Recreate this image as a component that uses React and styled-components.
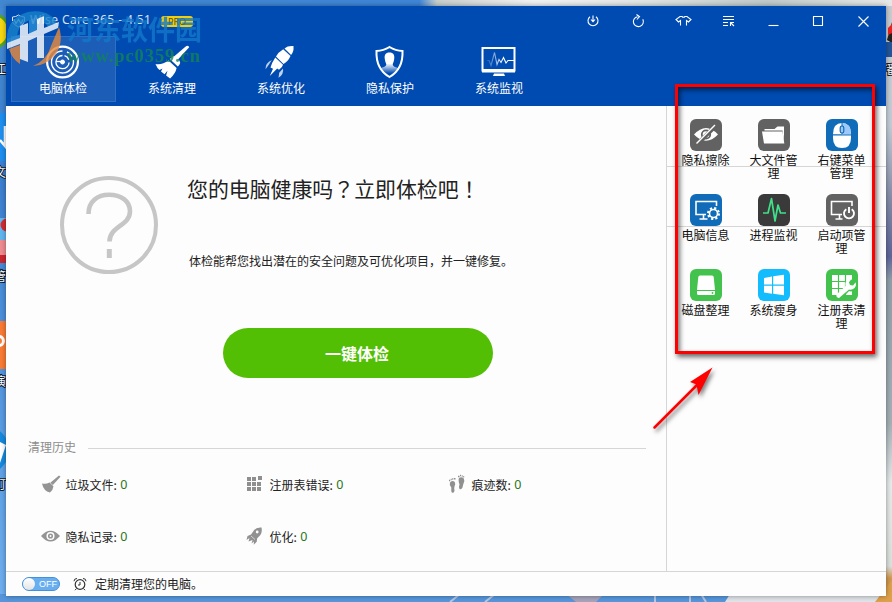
import React, { useState } from "react";
import styled, { createGlobalStyle } from "styled-components";

const GlobalStyle = createGlobalStyle`
  * {
    box-sizing: border-box;
  }

  body {
    margin: 0;
    overflow: hidden;
    font-family: "Noto Sans CJK SC", "Noto Sans", sans-serif;
    font-size: 12px;
    color: #222;
  }
`;

//  Styled components
const Desktop = styled.div`
  position: relative;
  width: 892px;
  height: 602px;
  padding: 6px;
  overflow: hidden;
  background: #4a8fdc;
`;

const Backdrop = styled.svg`
  position: absolute;
  inset: 0;
`;

const AppWindow = styled.div`
  position: relative;
  display: flex;
  flex-direction: column;
  width: 880px;
  height: 590px;
  background: #fdfdfd;
  box-shadow: 0 0 5px rgba(0, 0, 0, 0.4);
`;

const Header = styled.header`
  height: 100px;
  flex: none;
  background: #004bb1;
  color: #fff;
`;

const TitleBar = styled.div`
  display: flex;
  align-items: center;
  height: 30px;
  padding: 0 0 0 5px;
`;

const Title = styled.div`
  margin-left: 4px;
  width: 122px;
  font-family: "Noto Sans", sans-serif;
  font-size: 12px;
  letter-spacing: 0.4px;
  line-height: 16px;
  padding-bottom: 2px;
  white-space: nowrap;
  color: #d5e2f5;
`;

const ProTag = styled.span`
  margin-left: 9px;
  width: 32px;
  height: 11px;
  border-radius: 3px;
  background: #f0cf10;
  color: #5b4c08;
  font-family: "Noto Sans", sans-serif;
  font-size: 9px;
  line-height: 11px;
  text-align: center;
`;

const WindowButtons = styled.div`
  display: flex;
  margin-left: auto;
`;

const WindowButton = styled.button`
  display: flex;
  align-items: center;
  justify-content: center;
  width: 45px;
  height: 30px;
  padding: 0;
  border: 0;
  background: none;
`;

const Nav = styled.nav`
  display: flex;
  gap: 4px;
  padding-left: 5px;
`;

const NavItem = styled.button`
  display: flex;
  flex-direction: column;
  align-items: center;
  width: 105px;
  height: 66px;
  padding: 7px 1px 0 0;
  border: 1px solid ${props => (props.$active ? "#2f6fc4" : "transparent")};
  background: ${props => (props.$active ? "#1c5db8" : "none")};
  color: #fff;
  font-family: inherit;
  font-size: 12px;
  line-height: 16px;
`;

const Body = styled.div`
  display: flex;
  height: 465px;
  flex: none;
`;

const Main = styled.main`
  width: 660px;
  flex: none;
`;

const Hero = styled.section`
  display: flex;
  height: 222px;
  padding: 70px 0 0 54px;
`;

const HeroText = styled.div`
  margin-left: 30px;
`;

const Headline = styled.h1`
  margin: -4px 0 0 -1px;
  font-size: 20.9px;
  font-weight: 400;
  line-height: 32px;
  white-space: nowrap;
`;

// full-width punctuation centred in its cell
const Mark = styled.span`
  font-family: "Noto Sans CJK TC", sans-serif;
`;

const Hint = styled.p`
  margin: 49px 0 0 1px;
  line-height: 16px;
  white-space: nowrap;
`;

const CheckButton = styled.button`
  display: block;
  width: 270px;
  height: 50px;
  margin-left: 217px;
  padding: 0 2px 0 0;
  border: 0;
  border-radius: 25px;
  background: #52bf04;
  color: #fff;
  font-family: inherit;
  font-size: 16px;
  font-weight: 700;
  line-height: 48px;
`;

const HistoryHead = styled.div`
  display: flex;
  align-items: center;
  gap: 12px;
  height: 16px;
  margin: 60px 20px 0 22px;
  color: #8d8d8d;
`;

const Rule = styled.div`
  flex: 1;
  height: 1px;
  margin-top: 5px;
  background: #d6d6d6;
`;

const Stats = styled.div`
  display: grid;
  grid-template-columns: 204px 202px 200px;
  grid-auto-rows: 52px;
  margin: 4px 0 0 35px;
`;

const Stat = styled.div`
  display: flex;
  align-items: center;
  gap: 4.500px;
  white-space: nowrap;

  b {
    margin-left: -1px;
    font-family: "Noto Sans", sans-serif;
    font-size: 12.5px;
    font-weight: 400;
    color: #2c7520;
  }
`;

const Side = styled.aside`
  width: 220px;
  border-left: 1px solid #d6d6d6;
  background: linear-gradient(#d6d6d6, #d6d6d6) 0 60px / 100% 1px no-repeat,
    linear-gradient(#d6d6d6, #d6d6d6) 0 120px / 100% 1px no-repeat;
`;

const Tools = styled.div`
  display: grid;
  grid-template-columns: repeat(3, 68px);
  grid-auto-rows: 75px;
  padding: 13px 0 0 5px;
`;

const Tool = styled.div`
  display: flex;
  flex-direction: column;
  align-items: center;
  gap: 2px;
  color: #111;
  line-height: 13px;
  text-align: center;

  span {
    width: 50px;
    margin-right: 1px;
  }
`;

const Tile = styled.svg`
  display: block;
  width: 32px;
  height: 32px;
  flex: none;
  border-radius: 6px;
  background: ${props => props.$color};
`;

const Footer = styled.footer`
  display: flex;
  align-items: center;
  height: 25px;
  padding-left: 16px;
  border-top: 1px solid #d6d6d6;

  span {
    margin: -2px 0 0 8px;
  }
`;

const Switch = styled.button`
  display: flex;
  flex-direction: ${props => (props.$on ? "row-reverse" : "row")};
  align-items: center;
  width: 38px;
  height: 14px;
  margin-right: 13px;
  padding: 0 4px 0 0;
  border: 1px solid #4390dc;
  border-radius: 7px;
  background: #69aff0;
  color: #fff;
  font-family: "Liberation Sans", sans-serif;
  font-size: 9px;
  line-height: 12px;
`;

const Knob = styled.i`
  width: 12px;
  height: 12px;
  margin-right: 4px;
  flex: none;
  border-radius: 50%;
  background: linear-gradient(#fff, #e4e4e4);
`;

const Watermark = styled.div`
  position: absolute;
  left: 6px;
  top: 8px;
  display: flex;
  opacity: 0.8;
`;

const WatermarkText = styled.div`
  margin-left: 3px;
  padding-top: 3px;
  white-space: nowrap;

  strong {
    display: block;
    font-size: 27px;
    line-height: 36px;
    color: #1279cb;
  }

  em {
    display: block;
    font: 700 18.5px/18px "Liberation Serif", serif;
    letter-spacing: 0.9px;
    color: #128653;
  }
`;

const Marker = styled.div`
  position: absolute;
  left: 675px;
  top: 84px;
  width: 200px;
  height: 270px;
  border: 3px solid #f00;
  box-shadow: 2px 3px 5px rgba(0, 0, 0, 0.6), inset 2px 3px 5px rgba(0, 0, 0, 0.55);
`;

const Arrow = styled.svg`
  position: absolute;
  left: 640px;
  top: 355px;
  filter: drop-shadow(2px 3px 2px rgba(0, 0, 0, 0.5));
`;

//  End Styled components

const navIcons = {
  radar: (
    <g fill="none" stroke="#fff">
      <circle cx="17.5" cy="18" r="15.4" strokeWidth="2.2" />
      <path d="M17.5 7a11 11 0 1 0 10.8 9M22 8a11 11 0 0 1 5 4.5" strokeWidth="1.4" />
      <path d="M17.5 11.500a6.600 6.600 0 1 0 6.600 7M19.500 11.700a6.600 6.600 0 0 1 4.300 4" strokeWidth="1.300" />
      <circle cx="17.5" cy="18" r="2" fill="#fff" />
      <path d="M17 17.500h-6" strokeWidth="1.300" />
    </g>
  ),
  broom: (
    <g fill="#fff">
      <path d="M32 2.200q2.500-1.500 3.200 1l-11.500 12.500-3.700-3.300z" />
      <path d="M17.500 13.500q2-2 4-.5l4 3.800q1.500 2-.3 4.200l-1.400 1.500-8-7.500z" />
      <path d="M14.500 16.500q-6 4.500-13 3.500 1.500 4 4 6l3-1.500-1.500 3 3.500 2.800 3-3.500-1.400 4.800 4 2.900q5.500-5 6.500-10.500z" />
    </g>
  ),
  rocket: (
    <g fill="#fff">
      <path d="M30.500 2q-6-.5-9 2.400l6.600 6.500q2.900-3 2.400-8.900z" />
      <path d="M20.200 5.200q-5 3-7.200 7.300l7.500 7.400q4.500-2.300 7-7.900z" />
      <path d="M12.300 13.600q-3.500 5.200-4.800 10l2.500 1.200-3.200 7.200 7.400-7.600 1.800 1.400q3.500-2.300 4-5z" />
      <path d="M8.800 16q-6.500 3-6.300 9.200l3.300-4.500zM20 24.500q1 6-4.500 9.200l.7-5z" opacity=".75" />
    </g>
  ),
  shield: (
    <g>
      <path
        d="M17.500 3q6 3.800 13 4 .8 18-13 26Q3.700 25 4.500 7q7-.2 13-4z"
        fill="none"
        stroke="#fff"
        strokeWidth="2"
      />
      <path
        d="M17.500 8.500c4 0 5.300 2.500 4.700 6.500-.3 2.500-1.200 4-1.500 5.500.3 2.500 4 2.500 5.300 4q-3.500 4-8.500 6-5-2-8.500-6c1.300-1.500 5-1.500 5.300-4-.3-1.500-1.200-3-1.500-5.500-.6-4 .7-6.500 4.700-6.500z"
        fill="url(#fade)"
      />
      <defs>
        <linearGradient id="fade" x1="0" y1="0" x2="0" y2="1">
          <stop offset=".5" stopColor="#fff" />
          <stop offset=".95" stopColor="#fff" stopOpacity="0" />
        </linearGradient>
      </defs>
    </g>
  ),
  monitor: (
    <g>
      <path d="M1.500 4h32v22.500h-32z" fill="none" stroke="#fff" strokeWidth="2" />
      <path d="M1 25h33v3.500H1zM13 29.500h10l1 2.500H12z" fill="#fff" />
      <path
        d="M6 16.500h2l2 5 3.500-13 2.500 12 2-5 2 3 2.500-5 2.500 5.500 2-2.500h6"
        fill="none"
        stroke="url(#pulse)"
        strokeWidth="1.100"
      />
      <defs>
        <linearGradient id="pulse">
          <stop offset="0" stopColor="#fff" stopOpacity=".1" />
          <stop offset=".6" stopColor="#fff" />
        </linearGradient>
      </defs>
    </g>
  )
};

const navItems = [
  { label: "电脑体检", icon: "radar" },
  { label: "系统清理", icon: "broom" },
  { label: "系统优化", icon: "rocket" },
  { label: "隐私保护", icon: "shield" },
  { label: "系统监视", icon: "monitor" }
];

// all drawn on a 17px grid
const windowIcons = [
  {
    name: "update",
    art: <path d="M5 3.700a5 5 0 1 0 6 0M8 2.500v6M6 6.500l2 2.200 2-2.200" />
  },
  {
    name: "refresh",
    art: <path d="M12.800 6.300a5 5 0 1 1-5.300-2.600M6.500 1.500l3 2.200-2.600 2.800" />
  },
  {
    name: "skin",
    art: <path d="M5.500 12.500V7.500L3.500 9 1 6.500 5 3.500h2q1.500 1.500 3 0h2l4 3L13.500 9l-2-1.500v5" />
  },
  {
    name: "menu",
    art: <path d="M3 3.500h11M3 6.500h11M3 9.500h5M3 12.500h5M10.500 13V9.500H14M10.500 9.500l3.500 3.500" />
  },
  { name: "minimize", art: <path d="M3.500 12.500h10" /> },
  { name: "maximize", art: <path d="M3.500 3.500h9v9h-9z" /> },
  { name: "close", art: <path d="M3.500 3.500l10 10M13.500 3.500l-10 10" /> }
];

const tools = [
  {
    label: "隐私擦除",
    color: "#626262",
    art: (
      <g>
        <path d="M4 15.500q12-13 24 0-12 12.500-24 0z" fill="#fff" />
        <circle cx="16" cy="15.500" r="4.200" fill="none" stroke="#626262" strokeWidth="1.800" />
        <path d="M7.500 25L25.500 7" stroke="#626262" strokeWidth="4" />
        <path d="M6.500 24.500L25 6" stroke="#fff" strokeWidth="1.500" />
      </g>
    )
  },
  {
    label: "大文件管理",
    color: "#626262",
    art: (
      <g fill="#fff">
        <path d="M6.500 11.500V10h10l3-2.500h6.500v16l-1.500-12z" />
        <path d="M4 12.500h20.500l1.800 12H6z" />
      </g>
    )
  },
  {
    label: "右键菜单管理",
    color: "#106cb8",
    art: (
      <g>
        <path d="M7 15.200Q7 4 16 4t9 11.200z" fill="#fff" />
        <path d="M16 4q9 0 9 11.200h-9z" fill="#9cc9fa" />
        <path d="M7 16.500h18V19q0 10-9 10T7 19z" fill="#fff" />
        <path d="M16 4v11" stroke="#106cb8" />
        <rect x="14.200" y="7" width="3.600" height="7" rx="1.800" fill="#9cc9fa" stroke="#106cb8" strokeWidth="1.200" />
      </g>
    )
  },
  {
    label: "电脑信息",
    color: "#106cb8",
    art: (
      <g fill="none" stroke="#fff" strokeWidth="1.600">
        <path d="M16 20.500H6v-13h20.500V12M9.500 25h8M13.500 21v4" />
        <circle cx="23.500" cy="19.500" r="4" />
        <circle cx="23.500" cy="19.500" r="5.500" strokeDasharray="2.200 2.120" strokeWidth="2" />
      </g>
    )
  },
  {
    label: "进程监视",
    color: "#3a3a3a",
    art: (
      <path
        d="M5 19h5l3.500-14.500L17 27l3-16 2.500 8h5.500"
        fill="none"
        stroke="#3fe08a"
        strokeWidth="1.700"
        strokeLinejoin="round"
      />
    )
  },
  {
    label: "启动项管理",
    color: "#626262",
    art: (
      <g fill="none" stroke="#fff" strokeWidth="1.600">
        <path d="M16 20.500H5.500v-13H26V12M9.500 25h7M13.500 21v4" />
        <path d="M20.300 15.200a5 5 0 1 0 5.400 0M23 13v6" strokeWidth="1.900" />
      </g>
    )
  },
  {
    label: "磁盘整理",
    color: "#43c34e",
    art: (
      <g>
        <path d="M10 6.500h12q1.500 0 1.700 1.500L25 21H7L8.300 8q.2-1.500 1.700-1.500z" fill="#fff" />
        <path d="M7 22h18v2.500q0 1.500-1.500 1.500h-15Q7 26 7 24.500z" fill="#fff" />
        <circle cx="22.500" cy="24" r=".9" fill="#43c34e" />
      </g>
    )
  },
  {
    label: "系统瘦身",
    color: "#12bcfd",
    art: (
      <path
        d="M6 9l8-1.500v8H6zM15.200 7.300L26 5.700v9.800H15.200zM6 16.800h8v7.900l-8-1.200zM15.200 16.800H26v9.500l-10.800-1.500z"
        fill="#fff"
      />
    )
  },
  {
    label: "注册表清理",
    color: "#43c34e",
    art: (
      <g>
        <path d="M6 6h20v20H6z" fill="#fff" />
        <path d="M6 12.500h20M6 19.500h20M12.500 6v20M19.500 6v20" stroke="#43c34e" strokeWidth="1.200" />
        <path d="M13 28l8-8" stroke="#43c34e" strokeWidth="6" strokeLinecap="round" />
        <circle cx="25" cy="16.500" r="6" fill="#43c34e" />
        <path
          d="M11.500 28.500Q9.500 27 11 25l8.500-8q-1-5 3.500-6.800 1.500-.5 2.500-.2l-2.500 3.200 1 2.800 3 .5 2.700-3.200q1 5-2.700 6.800-2 1-4 .4L14.200 28q-1.200 1.500-2.700.5z"
          fill="#fff"
        />
      </g>
    )
  }
];

const stats = [
  {
    label: "垃圾文件",
    value: 0,
    art: (
      <g fill="#949494">
        <path d="M18 1.500l1.500 1.200-7.700 8.300-2.500-2.300z" />
        <path d="M8.500 8.500l4 3.700q-.5 4-3.500 6.300Q2.500 17 1 9.500q4 1 7.500-1z" />
      </g>
    )
  },
  {
    label: "注册表错误",
    value: 0,
    art: (
      <path
        d="M2 3h4v4H2zM7 3h4v4H7zM13 2h4v4h-4zM2 8h4v4H2zM7 8h4v4H7zM12 8h4v4h-4zM2 13h4v4H2zM7 13h4v4H7zM12 13h4v4h-4z"
        fill="#8f8f8f"
      />
    )
  },
  {
    label: "痕迹数",
    value: 0,
    art: (
      <g fill="#909090">
        <path d="M3 8.500q2.500-2.500 4.700-.5 1.300 2-.2 4.500-.6 1.500 0 4-.3 3-2.700 2Q4 17 4.300 13.500 2 11 3 8.500zM12 4q2.800-1.500 4.800.5 1.200 2-.3 5-.5 1.500-1 4-1 2.300-3 1.500-1.200-1.500 0-4.500Q11 6 12 4z" />
        <path d="M2 6.500h1.200M3.700 5.500h1M5.200 5h1M6.800 4.700h1.700M11 2.500h1.500M13 1.500h1M14.700 2h1M16.200 2.800h1" stroke="#909090" strokeWidth="1.400" />
      </g>
    )
  },
  {
    label: "隐私记录",
    value: 0,
    art: (
      <g>
        <path d="M0 10q9.500-10.500 19 0-9.500 11-19 0z" fill="#949494" />
        <circle cx="9.500" cy="10" r="3.300" fill="#949494" stroke="#fdfdfd" strokeWidth="1.500" />
        <circle cx="9.500" cy="10" r="1" fill="#fdfdfd" />
      </g>
    )
  },
  {
    label: "优化",
    value: 0,
    art: (
      <g>
        <path d="M16.500 1.500q-5-.5-7.500 2.700L6 8.500 2.500 10l-1 4 3-2-1 3.500 4-1.500-1 3.500 2.500-2-.3 3.300 3-3 .5-3.500 3-3q2.300-2.800 1.300-7.800z" fill="#919191" />
        <circle cx="12.200" cy="6" r="1.400" fill="#fdfdfd" />
        <path d="M6 10l4 3.500" stroke="#fdfdfd" strokeWidth=".6" />
      </g>
    )
  }
];

// icons whose edges stick out from behind the window
const desktopLabels = [
  { text: "江", y: 74 },
  { text: "文", y: 177 },
  { text: "管", y: 281 },
  { text: "演", y: 386 },
  { text: "町", y: 489 }
];

function DesktopArt() {
  return (
    <Backdrop width="892" height="602">
      <defs>
        <linearGradient id="sky" x1="0" y1="0" x2="0" y2="1">
          <stop offset="0" stopColor="#438bd6" />
          <stop offset=".3" stopColor="#3c80cf" />
          <stop offset="1" stopColor="#70b0f0" />
        </linearGradient>
        <linearGradient id="top">
          <stop offset="0" stopColor="#4187d2" />
          <stop offset=".47" stopColor="#3f86d8" />
          <stop offset=".49" stopColor="#c7cfcd" />
          <stop offset=".6" stopColor="#f1f3f3" />
          <stop offset=".72" stopColor="#dfe4e4" />
          <stop offset=".86" stopColor="#bfcaca" />
          <stop offset="1" stopColor="#e6e8e8" />
        </linearGradient>
        <linearGradient id="right" x1="0" y1="0" x2="0" y2="1">
          <stop offset="0" stopColor="#c8cccf" />
          <stop offset=".2" stopColor="#c2ccd6" />
          <stop offset=".33" stopColor="#8189a5" />
          <stop offset=".42" stopColor="#5e6699" />
          <stop offset=".46" stopColor="#8f9fa8" />
          <stop offset=".7" stopColor="#a4b0b6" />
          <stop offset=".8" stopColor="#e6eaea" />
          <stop offset=".94" stopColor="#dce0dc" />
          <stop offset=".96" stopColor="#cf9850" />
        </linearGradient>
      </defs>
      <rect width="20" height="602" fill="url(#sky)" />
      <rect width="892" height="8" fill="url(#top)" />
      <rect x="884" y="6" width="8" height="596" fill="url(#right)" />
      <path d="M0 594h730v8H0z" fill="#5796dc" />
      <path d="M730 594h162v8H725z" fill="#dfe4e8" />
      <path d="M450 602l10-8M485 602l10-8M655 602v-8M690 602v-8M706 602l-5-8" stroke="#b7c9e6" strokeWidth="2" />
      <path d="M566 594h38l-8 8h-20z" fill="#a6a3bb" />
      <path d="M875 602l17-22v22z" fill="#dda04b" />
      <path d="M892 22l-5 18 5 3z" fill="#222" />
      <path d="M888 28l4-4v9l-4 2z" fill="#e22" />
      <path d="M886 42h6v15h-6z" fill="#24569b" />
      <circle cx="-8" cy="31" r="17" fill="#f6d812" stroke="#55a522" strokeWidth="3" />
      <rect x="-40" y="113" width="48" height="48" fill="#1e8ff0" />
      <path d="M0 140l5 6V126" fill="none" stroke="#fff" strokeWidth="2.500" />
      <rect x="-40" y="218" width="48" height="23" fill="#62b6ef" />
      <circle cx="7" cy="225" r="6.500" fill="#d62b31" />
      <rect x="-40" y="240" width="48" height="22" fill="#ef8c92" />
      <rect x="-40" y="255" width="48" height="8" fill="#cb2730" />
      <rect x="-40" y="321" width="48" height="48" fill="#fa7b35" />
      <circle cx="-1" cy="341" r="4.500" fill="none" stroke="#fff" strokeWidth="3" />
      <circle cx="-15" cy="450" r="24" fill="#1689dd" />
      <path d="M0 442l6 3-6 18z" fill="#fff" />
      {desktopLabels.map(label => (
        <text key={label.y} x="-6" y={label.y} fontSize="12" fill="#fff" stroke="#123" strokeWidth="2" paintOrder="stroke">
          {label.text}
        </text>
      ))}
      <text x="886" y="74" fontSize="12" fill="#fff" stroke="#222" strokeWidth="2" paintOrder="stroke">
        番
      </text>
    </Backdrop>
  );
}

function App() {
  const [active, setActive] = useState("电脑体检");
  const [scheduled, setScheduled] = useState(false);

  return (
    <Desktop>
      <GlobalStyle />
      <DesktopArt />

      <AppWindow>
        <Header>
          <TitleBar>
            <svg width="15" height="14" viewBox="0 0 15 14" fill="none" stroke="#d5e2f5">
              <path d="M1.500 7V3Q5 3 7.500 1q2.500 2 6 2v4q-1 4-6 6-4.500-2-6-5" />
              <path d="M3 5.500l2 4 2.500-4 2.500 4 2-4" strokeWidth="1.300" />
            </svg>
            <Title>Wise Care 365 - 4.51</Title>
            <ProTag>PRO</ProTag>
            <WindowButtons>
              {windowIcons.map(icon => (
                <WindowButton key={icon.name} aria-label={icon.name}>
                  <svg width="17" height="17" fill="none" stroke="#fff" strokeWidth="1.100">
                    {icon.art}
                  </svg>
                </WindowButton>
              ))}
            </WindowButtons>
          </TitleBar>
          <Nav>
            {navItems.map(item => (
              <NavItem
                key={item.label}
                $active={item.label === active}
                onClick={() => setActive(item.label)}
              >
                <svg width="36" height="36">
                  {navIcons[item.icon]}
                </svg>
                {item.label}
              </NavItem>
            ))}
          </Nav>
        </Header>

        <Body>
          <Main>
            <Hero>
              <svg width="98" height="98" fill="none" stroke="#c6c6c6" strokeWidth="4">
                <circle cx="49" cy="49" r="47" />
                <path d="M28.500 38C28.500 25 38 18.800 49 18.800c12 0 21 6 21 16.500C70 50 49.500 50 49.500 65.500" strokeWidth="4.600" />
                <path d="M49.300 73v9" strokeWidth="5" />
              </svg>
              <HeroText>
                <Headline>
                  您的电脑健康吗<Mark>？</Mark>立即体检吧<Mark>！</Mark>
                </Headline>
                <Hint>体检能帮您找出潜在的安全问题及可优化项目，并一键修复。</Hint>
              </HeroText>
            </Hero>
            <CheckButton>一键体检</CheckButton>
            <HistoryHead>
              清理历史
              <Rule />
            </HistoryHead>
            <Stats>
              {stats.map(stat => (
                <Stat key={stat.label}>
                  <svg width="20" height="20">
                    {stat.art}
                  </svg>
                  {stat.label}: <b>{stat.value}</b>
                </Stat>
              ))}
            </Stats>
          </Main>
          <Side>
            <Tools>
              {tools.map(tool => (
                <Tool key={tool.label}>
                  <Tile $color={tool.color}>{tool.art}</Tile>
                  <span>{tool.label}</span>
                </Tool>
              ))}
            </Tools>
          </Side>
        </Body>

        <Footer>
          <Switch $on={scheduled} onClick={() => setScheduled(!scheduled)}>
            <Knob />
            {scheduled ? "ON" : "OFF"}
          </Switch>
          <svg width="14" height="14" fill="none" stroke="#333">
            <circle cx="7" cy="7.500" r="4.800" strokeWidth="1.200" />
            <path d="M7 5v3h-2M1 4.200Q1 1.500 4 1.500M13 4.200Q13 1.500 10 1.500M3.500 11.500L2 13.200M10.500 11.500l1.500 1.700" />
          </svg>
          <span>定期清理您的电脑。</span>
        </Footer>
      </AppWindow>

      <Watermark>
        <svg width="58" height="60">
          <path d="M1 33Q0 10 22 4q22-4 31 14l-9 3Q36 9 24 12 11 16 11 31z" fill="#1a83cc" />
          <path d="M1 31l17-6v8l-17 7zM23 12l8-3v17l-8 4z" fill="#2b8fd6" />
          <path d="M3 41l11-4v19Q6 51 3 41zM45 38l8-19q5 16-4 28-9 11-22 11 14-6 18-20z" fill="#e8893a" />
          <path d="M14 18l8-3v11l9-4V11l7-3v12l15-6-1 6-14 6v24h-7V29l-9 4v21l-8-3V36L1 41v-6l13-5z" fill="#fff" />
        </svg>
        <WatermarkText>
          <strong>河东软件园</strong>
          <em>www.pc0359.cn</em>
        </WatermarkText>
      </Watermark>
      <Marker />
      <Arrow width="90" height="90">
        <path d="M14.500 72.500L58 29" stroke="#f00" strokeWidth="2.500" strokeLinecap="round" />
        <path d="M72.500 12.500L50 27l6.500 2.500L58.500 40z" fill="#f00" />
      </Arrow>
    </Desktop>
  );
}

export default App;
